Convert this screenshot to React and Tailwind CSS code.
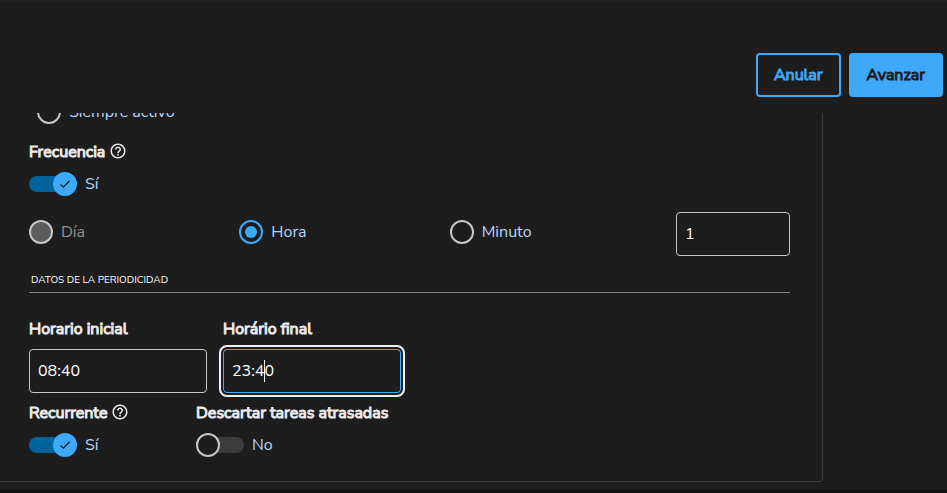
import { useState } from "react";

function HelpIcon() {
  return (
    <svg viewBox="0 0 24 24" className="size-[18px]" fill="currentColor" aria-hidden="true">
      <path d="M11 18h2v-2h-2v2zm1-16C6.48 2 2 6.48 2 12s4.48 10 10 10 10-4.48 10-10S17.52 2 12 2zm0 18c-4.41 0-8-3.59-8-8s3.59-8 8-8 8 3.59 8 8-3.59 8-8 8zm0-14c-2.21 0-4 1.79-4 4h2c0-1.1.9-2 2-2s2 .9 2 2c0 2-3 1.75-3 5h2c0-2.25 3-2.5 3-5 0-2.21-1.79-4-4-4z" />
    </svg>
  );
}

function Switch({ id, title, help, checked, onChange }) {
  return (
    <div>
      <div className="flex items-start gap-1 h-6 text-[#ebebeb] whitespace-nowrap">
        <label htmlFor={id} className="[-webkit-text-stroke:1px]">
          {title}
        </label>
        {help && (
          <button type="button" aria-label={`Ayuda: ${title}`} className="pt-0.5">
            <HelpIcon />
          </button>
        )}
      </div>
      <label className="mt-2 flex items-center gap-2 w-fit cursor-pointer">
        <input
          id={id}
          type="checkbox"
          role="switch"
          checked={checked}
          onChange={(e) => onChange(e.target.checked)}
          className="peer sr-only"
        />
        <span className="flex items-center w-12 h-4 rounded-full bg-[#3c3c3c] peer-checked:bg-[#00639b] peer-checked:justify-end">
          {checked ? (
            <span className="flex items-center justify-center size-6 rounded-full bg-[#3fa9f9] text-[#1d1d1d]">
              <svg viewBox="0 0 12 12" className="size-3" fill="none" stroke="currentColor" strokeWidth="1.3">
                <path d="M1.4 6.4 4.3 9.2 10.6 2.8" />
              </svg>
            </span>
          ) : (
            <span className="size-6 rounded-full border-2 border-[#c6c6c6] bg-[#1d1d1d]" />
          )}
        </span>
        <span className="text-[#b5d6ff]">{checked ? "Sí" : "No"}</span>
      </label>
    </div>
  );
}

function Radio({ name, label, ...props }) {
  return (
    <label className="flex flex-1 items-center gap-2 h-6 text-[#b5d6ff] has-disabled:text-[#929292]">
      <input
        type="radio"
        name={name}
        className="appearance-none grid place-items-center size-6 shrink-0 rounded-full border-2 border-[#c6c6c6] checked:border-[#3fa9f9] checked:before:size-3 checked:before:rounded-full checked:before:bg-[#3fa9f9] disabled:bg-[#5c5c5c]"
        {...props}
      />
      {label}
    </label>
  );
}

function TimeField({ id, label, value, onChange, active }) {
  return (
    <div className="w-[178px]">
      <label htmlFor={id} className="block h-6 text-[#ebebeb] [-webkit-text-stroke:1px]">
        {label}
      </label>
      <div className="relative mt-2">
        <input
          id={id}
          type="text"
          value={value}
          onChange={(e) => onChange(e.target.value)}
          className={
            active
              ? "block w-full h-11 px-2 rounded-sm border border-[#3fa9f9] bg-transparent text-white caret-transparent outline-2 outline-offset-2 outline-[#e8f1ff]"
              : "block w-full h-11 px-2 rounded-sm border border-[#c6c6c6] bg-transparent text-white"
          }
        />
        {active && <span className="absolute left-[41px] top-[11px] w-px h-[22px] bg-white" />}
      </div>
    </div>
  );
}

export default function App() {
  const [frequency, setFrequency] = useState(true);
  const [unit, setUnit] = useState("hora");
  const [amount, setAmount] = useState("1");
  const [start, setStart] = useState("08:40");
  const [end, setEnd] = useState("23:40");
  const [recurrent, setRecurrent] = useState(true);
  const [discard, setDiscard] = useState(false);

  return (
    <div className="flex flex-col min-h-screen bg-[#1d1d1d] border-t-2 border-t-[#212121] border-b-3 border-b-[#121010] font-['Nunito_Sans',Nunito,Lato,sans-serif] text-base">
      <header className="flex justify-end gap-2 pt-[51px] pr-1 pb-4 [-webkit-text-stroke:1px]">
        <button type="button" className="h-11 px-4 rounded-sm border-2 border-[#3fa9f9] text-[#3fa9f9]">
          Anular
        </button>
        <button type="button" className="h-11 px-4 rounded-sm border-2 border-[#3fa9f9] bg-[#3fa9f9] text-[#1d1d1d]">
          Avanzar
        </button>
      </header>

      <main className="overflow-hidden">
        {/* panel scrolled under the header */}
        <form className="-mt-[13px] mr-[124px] pl-[29px] pr-8 pb-6 border-r border-b border-[#3c3c3c] rounded-br-sm">
          <div className="flex pl-2">
            <Radio name="active" label="Siempre activo" />
          </div>

          <div className="mt-4">
            <Switch id="frequency" title="Frecuencia" help checked={frequency} onChange={setFrequency} />
          </div>

          <div className="mt-4 flex items-start gap-4">
            <div className="flex flex-1 pt-2">
              <Radio name="unit" label="Día" disabled />
              <Radio name="unit" label="Hora" checked={unit === "hora"} onChange={() => setUnit("hora")} />
              <Radio name="unit" label="Minuto" checked={unit === "minuto"} onChange={() => setUnit("minuto")} />
            </div>
            <input
              type="text"
              aria-label="Intervalo"
              value={amount}
              onChange={(e) => setAmount(e.target.value)}
              className="w-[114px] h-11 px-2 rounded-sm border border-[#c6c6c6] bg-transparent text-white"
            />
          </div>

          <h2 className="mt-4 pl-0.5 pb-1 h-[21px] border-b border-[#808080] text-[10px] leading-4 text-white">
            DATOS DE LA PERIODICIDAD
          </h2>

          <div className="mt-6 flex gap-4">
            <TimeField id="start" label="Horario inicial" value={start} onChange={setStart} />
            <TimeField id="end" label="Horário final" value={end} onChange={setEnd} active />
          </div>

          <div className="mt-2 flex gap-4">
            <div className="w-[151px]">
              <Switch id="recurrent" title="Recurrente" help checked={recurrent} onChange={setRecurrent} />
            </div>
            <Switch id="discard" title="Descartar tareas atrasadas" checked={discard} onChange={setDiscard} />
          </div>
        </form>
      </main>
    </div>
  );
}
